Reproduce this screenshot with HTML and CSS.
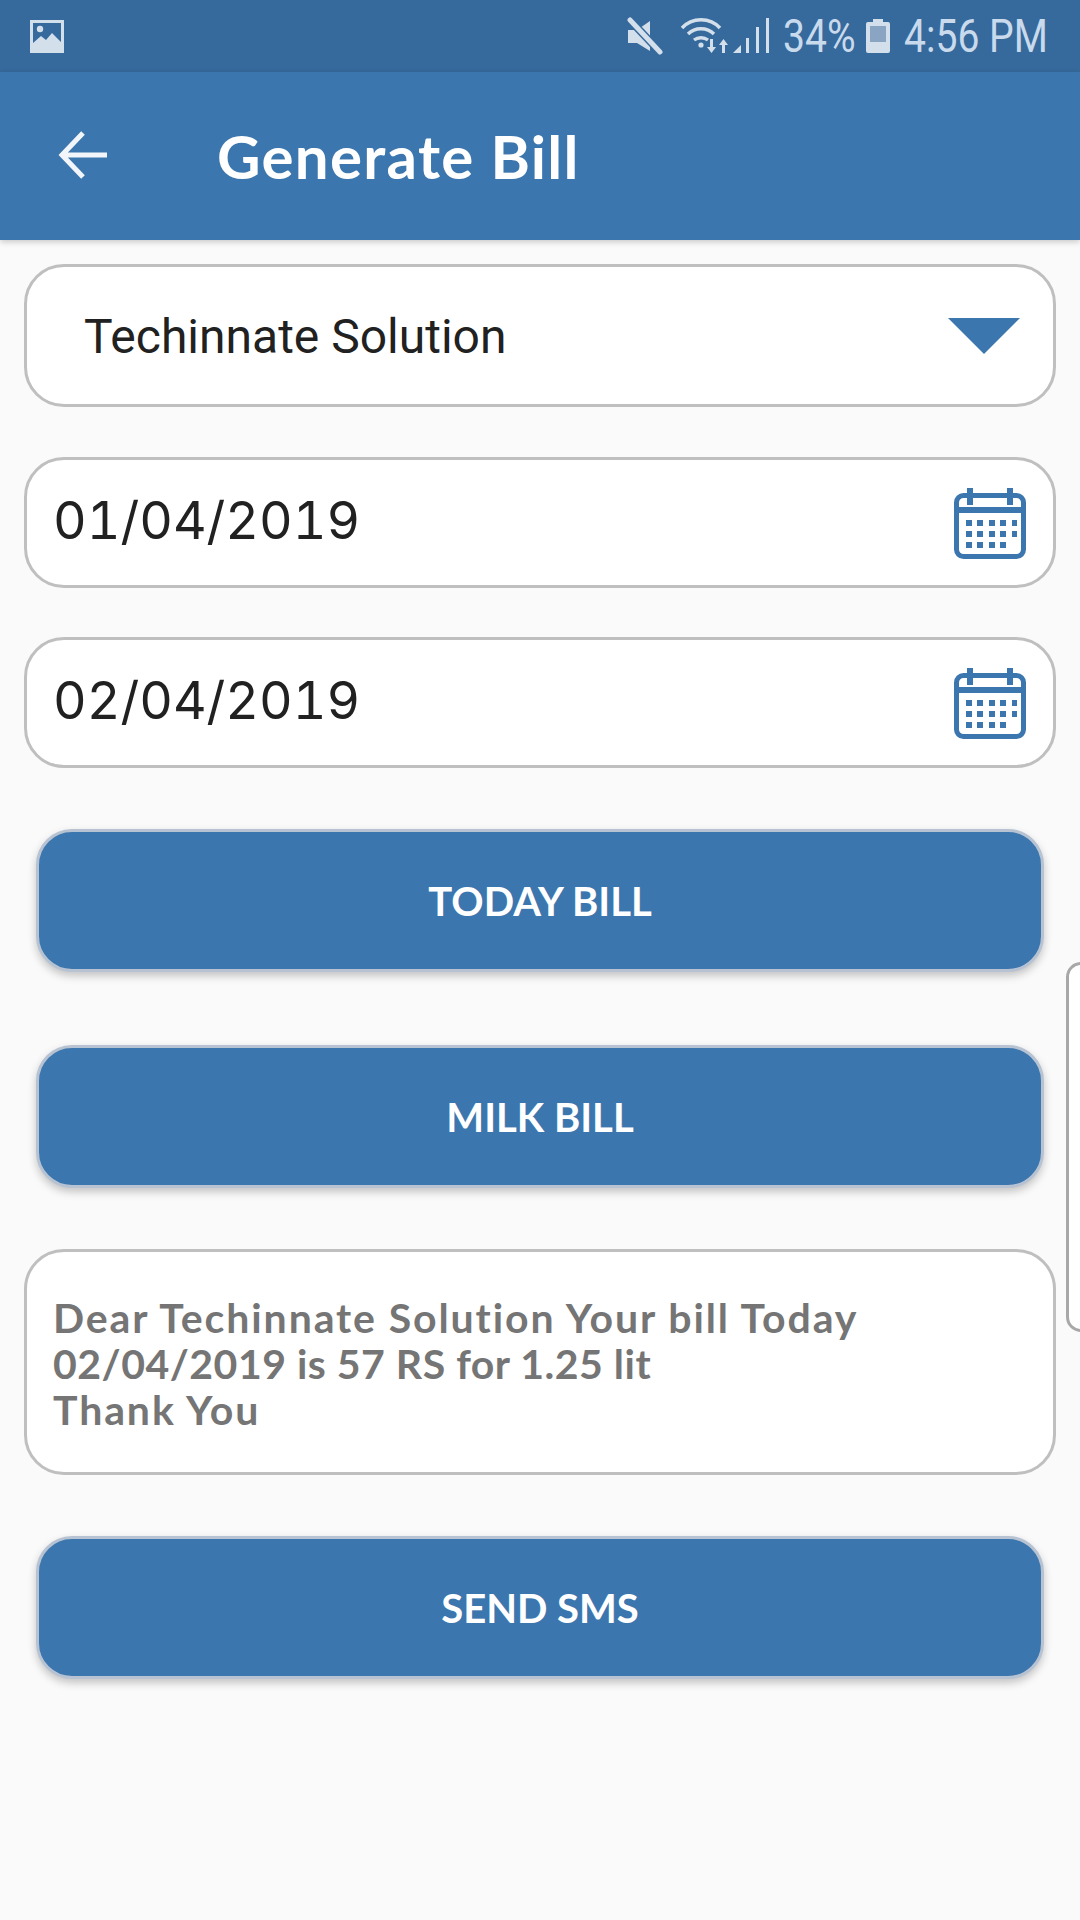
FILE: index.html
```html
<!DOCTYPE html>
<html lang="en">
<head>
    <meta charset="UTF-8">
    <meta name="viewport" content="width=device-width, initial-scale=1.0">
    <title>Generate Bill</title>
    <link rel="stylesheet" href="styles.css">
</head>
<body>
    <div class="status-bar">
        <svg class="status-gallery" width="36" height="36" viewBox="0 0 36 36">
            <path fill="#d3dfeb" fill-rule="evenodd" d="M1 2h34v33H1z M4 5v20l8-7 5 4 6-7 9 9V5z"/>
            <circle cx="11" cy="11" r="3.2" fill="#d3dfeb"/>
        </svg>
        <div class="status-right">
            <svg width="36" height="38" viewBox="0 0 36 38">
                <path fill="#d3dfeb" d="M1 13h9l13-9v30l-13-8H1z"/>
                <path stroke="#366a9c" stroke-width="8" d="M0 0l36 38"/>
                <path stroke="#d3dfeb" stroke-width="5" stroke-linecap="round" d="M3 3l30 32"/>
            </svg>
            <svg class="status-wifi" width="50" height="38" viewBox="0 0 50 38">
                <g fill="none" stroke="#d3dfeb" stroke-width="3.4">
                    <path d="M2 11C12 0 30 0 40 11"/>
                    <path d="M8 17c7-7 19-7 26 0"/>
                    <path d="M14 23c4-3 10-3 14 0"/>
                </g>
                <circle cx="21" cy="28" r="2.6" fill="#d3dfeb"/>
                <path fill="#d3dfeb" d="M30 22h3v8h3l-4.500 6-4.500-6h3zM42 36h3v-8h3l-4.500-6-4.500 6h3z"/>
            </svg>
            <svg class="status-signal" width="36" height="38" viewBox="0 0 36 38">
                <path fill="#d3dfeb" d="M0 36l8-8v8z"/>
                <path fill="#d3dfeb" d="M13 21h3v15h-3zM23 10h3v26h-3zM33 1h3v35h-3z"/>
            </svg>
            <span class="status-text status-pct">34%</span>
            <svg class="status-batt" width="26" height="38" viewBox="0 0 26 38">
                <path fill="#d3dfeb" d="M8 2h10v3h5q2 0 2 2v27q0 2-2 2H3q-2 0-2-2V7q0-2 2-2h5z"/>
                <path fill="#8aa5c4" d="M5 9h16v16H5z"/>
            </svg>
            <span class="status-text status-time">4:56 PM</span>
        </div>
    </div>

    <div class="app-bar">
        <svg class="back-icon" width="52" height="52" viewBox="0 0 52 52">
            <path fill="none" stroke="#f2f6fa" stroke-width="5" d="M49 25H5M25 3L4 25l21 22"/>
        </svg>
        <h1 class="app-title">Generate Bill</h1>
    </div>

    <div class="content">
        <div class="field field-select">
            <span class="select-text">Techinnate Solution</span>
            <span class="select-arrow"></span>
        </div>

        <div class="field field-date">
            <span class="date-text">01/04/2019</span>
            <svg class="calendar" width="72" height="72" viewBox="0 0 72 72">
                <use href="#calendar-icon"/>
            </svg>
        </div>

        <div class="field field-date">
            <span class="date-text">02/04/2019</span>
            <svg class="calendar" width="72" height="72" viewBox="0 0 72 72">
                <use href="#calendar-icon"/>
            </svg>
        </div>

        <button class="action action-today">TODAY BILL</button>
        <button class="action action-milk">MILK BILL</button>

        <div class="field field-message">Dear Techinnate Solution Your bill Today<br><span class="message-numbers">02/04/2019 is 57 RS for 1.25 lit</span><br>Thank You</div>

        <button class="action action-sms">SEND SMS</button>
    </div>

    <div class="side-panel"></div>

    <svg class="icon-defs" width="0" height="0">
        <symbol id="calendar-icon" viewBox="0 0 72 72">
            <rect x="2.500" y="8.500" width="67" height="61" rx="7" fill="none" stroke="#3c76ae" stroke-width="5"/>
            <path fill="#3c76ae" d="M3 20h66v6H3zM13 1h6v17h-6zM53 1h6v17h-6z"/>
            <path fill="#3c76ae" d="M12 33h6v6h-6zM23 33h6v6h-6zM35 33h6v6h-6zM46 33h6v6h-6zM58 33h5v6h-5zM12 44h6v6h-6zM23 44h6v6h-6zM35 44h6v6h-6zM46 44h6v6h-6zM58 44h5v6h-5zM12 55h6v6h-6zM23 55h6v6h-6zM35 55h6v6h-6zM46 55h6v6h-6z"/>
        </symbol>
    </svg>
</body>
</html>
```

FILE: styles.css
```css
body {
    font-family: "Lato", sans-serif;
    background-color: #fafafa;
    margin: 0;
    width: 1080px;
    height: 1920px;
    overflow: hidden;
    position: relative;
}
.status-bar {
    height: 72px;
    background-color: #366a9c;
    display: flex;
    align-items: center;
    justify-content: space-between;
    padding: 0 33px 0 29px;
    box-sizing: border-box;
}
.status-right {
    display: flex;
    align-items: center;
}
.status-wifi {
    margin-left: 17px;
}
.status-signal {
    margin-left: 3px;
}
.status-text {
    font-family: "Roboto", sans-serif;
    font-size: 46px;
    color: #c9daec;
    display: inline-block;
    transform: scaleX(0.85);
    white-space: nowrap;
    transform-origin: left center;
}
.status-pct {
    width: 69px;
    margin-left: 14px;
}
.status-batt {
    margin-left: 13px;
}
.status-time {
    width: 143px;
    margin-left: 13px;
}
.app-bar {
    height: 168px;
    background-color: #3c76ae;
    display: flex;
    align-items: center;
    box-shadow: 0 2px 6px rgba(0, 0, 0, 0.2);
    position: relative;
}
.back-icon {
    margin-left: 58px;
}
.app-title {
    margin: 0 0 0 107px;
    font-size: 60px;
    font-weight: 700;
    letter-spacing: 1.3px;
    color: #fff;
}
.content {
    padding: 24px 24px 0;
    display: flex;
    flex-direction: column;
}
.field {
    background-color: #fff;
    border: 3px solid #bfbfbf;
    border-radius: 40px;
    box-sizing: border-box;
    display: flex;
    align-items: center;
    justify-content: space-between;
}
.field-select {
    height: 143px;
    padding: 0 33px 0 57px;
}
.select-text {
    font-family: "Roboto", sans-serif;
    font-size: 48px;
    color: #212121;
    margin-top: 2px;
}
.select-arrow {
    width: 0;
    height: 0;
    border-left: 36px solid transparent;
    border-right: 36px solid transparent;
    border-top: 36px solid #3c76ae;
}
.field-date {
    height: 131px;
    margin-top: 50px;
    padding: 0 27px 0 26px;
}
.field-date + .field-date {
    margin-top: 49px;
}
.date-text {
    font-family: "Inter", sans-serif;
    font-size: 52px;
    font-variant-numeric: tabular-nums;
    color: #212121;
    margin-bottom: 4px;
}
.action {
    height: 143px;
    margin: 0 12px;
    background-color: #3c76ae;
    border: 3px solid #b7c3d3;
    border-radius: 36px;
    box-shadow: 0 4px 8px rgba(0, 0, 0, 0.22);
    color: #fff;
    font-family: "Lato", sans-serif;
    font-size: 40px;
    font-weight: 700;
    text-align: center;
    padding: 0;
}
.action-today {
    margin-top: 61px;
}
.action-milk {
    margin-top: 73px;
}
.action-sms {
    margin-top: 61px;
}
.field-message {
    display: block;
    height: 226px;
    margin-top: 61px;
    padding: 43px 26px 0;
    font-size: 41px;
    font-weight: 700;
    line-height: 46px;
    letter-spacing: 1.9px;
    color: #757575;
}
.message-numbers {
    letter-spacing: 0.5px;
}
.side-panel {
    position: absolute;
    left: 1066px;
    top: 962px;
    width: 30px;
    height: 370px;
    background-color: #fff;
    border: 3px solid #a8a8a8;
    border-radius: 20px;
    box-sizing: border-box;
}
.icon-defs {
    position: absolute;
}
```
